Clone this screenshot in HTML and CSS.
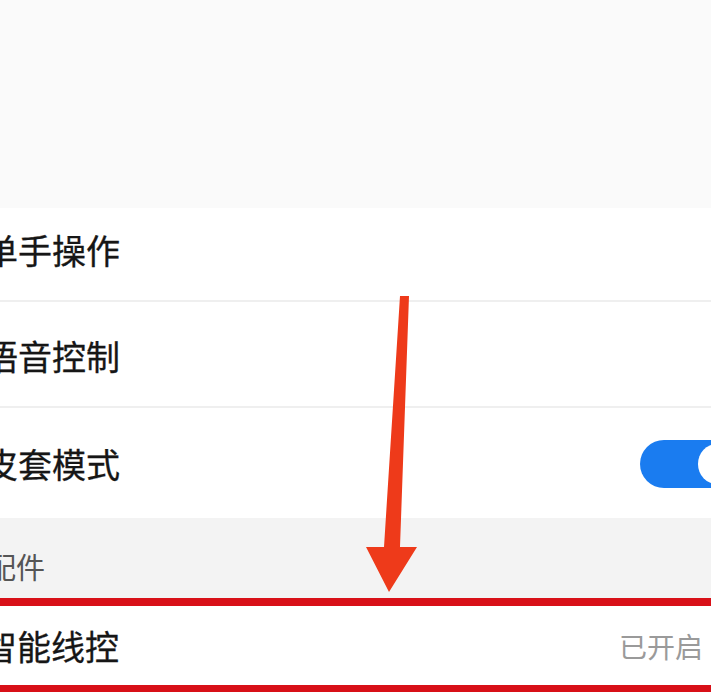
FILE: index.html
```html
<!DOCTYPE html>
<html lang="zh-CN">
<head>
<meta charset="utf-8">
<title>设置</title>
<link rel="stylesheet" href="styles.css">
</head>
<body>
<div class="page">
  <div class="top-space"></div>
  <div class="group">
    <div class="row row-first"><span class="label">单手操作</span></div>
    <div class="row row-mid"><span class="label">语音控制</span></div>
    <div class="row row-last">
      <span class="label">皮套模式</span>
      <span class="switch on"><span class="knob"></span></span>
    </div>
  </div>
  <div class="section-header"><span class="section-title">配件</span></div>
  <div class="row row-highlight">
    <span class="label">智能线控</span>
    <span class="value">已开启</span>
  </div>
  <div class="bottom-space"></div>
  <svg class="arrow" width="711" height="700" viewBox="0 0 711 700" aria-hidden="true">
    <polygon points="400,296 409,296 400,547 417,547 389,592 366,547 384,547" fill="#ee3a1a"/>
  </svg>
</div>
</body>
</html>
```

FILE: styles.css
```css
html, body {
  margin: 0;
  padding: 0;
  background: #ffffff;
}
body {
  width: 711px;
  height: 700px;
  overflow: hidden;
  font-family: "Noto Sans CJK SC", "Noto Sans", sans-serif;
  color: #161616;
}
.page {
  position: relative;
  width: 711px;
  height: 700px;
  display: flex;
  flex-direction: column;
}
.top-space {
  height: 208px;
  background: #fafafa;
  flex: none;
}
.group {
  background: #ffffff;
  flex: none;
}
.row {
  display: flex;
  align-items: center;
  justify-content: space-between;
  background: #ffffff;
  box-sizing: border-box;
}
.row-first {
  height: 94px;
  border-bottom: 2px solid #efefef;
  padding-bottom: 8px;
}
.row-mid {
  height: 106px;
  border-bottom: 2px solid #efefef;
  padding-top: 4px;
}
.row-last {
  height: 110px;
  padding-top: 2px;
}
.label {
  font-size: 34px;
  line-height: 1;
  margin-left: -16px;
  white-space: nowrap;
  -webkit-text-stroke: 0.3px #161616;
}
.switch {
  display: flex;
  align-items: center;
  width: 96px;
  height: 48px;
  border-radius: 24px;
  background: #1a7cf0;
  margin-right: -25px;
  box-sizing: border-box;
  padding-left: 58px;
}
.knob {
  width: 40px;
  height: 40px;
  border-radius: 50%;
  background: #ffffff;
}
.section-header {
  height: 80px;
  background: #f3f3f3;
  display: flex;
  align-items: center;
  flex: none;
  padding-top: 16px;
  box-sizing: border-box;
}
.section-title {
  font-size: 29px;
  line-height: 1;
  color: #555555;
  margin-left: -13px;
}
.row-highlight {
  height: 94px;
  border-top: 8px solid #d81018;
  border-bottom: 7px solid #d81018;
  flex: none;
}
.row-highlight .label {
  margin-left: -17px;
}
.value {
  font-size: 28px;
  line-height: 1;
  color: #9a9a9a;
  margin-right: 8px;
}
.bottom-space {
  flex: 1;
  background: #ffffff;
}
.arrow {
  position: absolute;
  left: 0;
  top: 0;
  pointer-events: none;
}
```
